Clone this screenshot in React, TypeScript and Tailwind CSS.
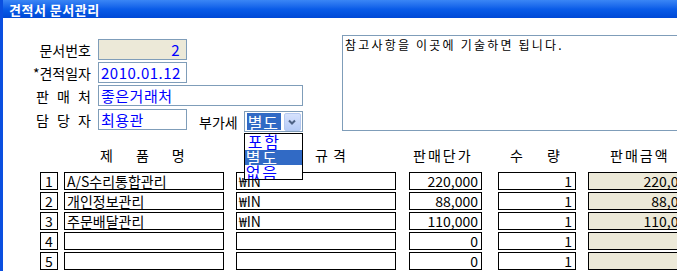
import React from "react";

const Cell = ({ w, children, bg = "bg-white", align = "justify-start", cls = "" }: { w: string; children?: React.ReactNode; bg?: string; align?: string; cls?: string }) => (
  <div className={`${w} h-[18px] shrink-0 border border-black ${bg} flex items-center ${align} px-[2px] overflow-hidden whitespace-nowrap text-[14px] leading-none text-black ${cls}`}>
    {children}
  </div>
);

const rows = [
  { n: "1", name: "A/S수리통합관리", spec: "₩IN", price: "220,000", qty: "1", amt: "220,000" },
  { n: "2", name: "개인정보관리", spec: "₩IN", price: "88,000", qty: "1", amt: "88,000" },
  { n: "3", name: "주문배달관리", spec: "₩IN", price: "110,000", qty: "1", amt: "110,000" },
  { n: "4", name: "", spec: "", price: "0", qty: "1", amt: "" },
  { n: "5", name: "", spec: "", price: "0", qty: "1", amt: "" },
];

const Field = ({ w, children, bg = "bg-white", right = false }: { w: string; children?: React.ReactNode; bg?: string; right?: boolean }) => (
  <div className={`${w} h-[21px] shrink-0 border border-[#7f9db9] ${bg} flex items-center ${right ? "justify-end pr-[6px]" : "pl-[2px]"} text-[15px] leading-none text-[#0000ff] tracking-[0.5px] whitespace-nowrap overflow-hidden`}>
    {children}
  </div>
);

export default function App() {
  return (
    <div className="w-[677px] h-[271px] overflow-hidden bg-white flex flex-col font-['Noto_Sans_CJK_KR',sans-serif] text-black">
      <div className="h-[18px] shrink-0 bg-gradient-to-b from-[#3a86f5] via-[#0a5ce8] to-[#0049d6] flex items-center pl-[6px] border-l-[3px] border-[#0a4fe0]">
        <span className="text-white text-[13px] font-bold leading-none tracking-[0.5px]">견적서 문서관리</span>
      </div>
      <div className="flex-1 border-l-[3px] border-[#0a4fe0] flex flex-col">
        <div className="flex pt-[17px]">
          <div className="w-[339px] shrink-0 pt-[4px] flex flex-col text-[14px] leading-none">
            <div className="flex items-center h-[21px] mb-[2px]">
              <div className="w-[88px] flex justify-end">문서번호</div>
              <div className="ml-[7px]">
                <Field w="w-[89px]" bg="bg-[#ece9d8]" right>2</Field>
              </div>
            </div>
            <div className="flex items-center h-[21px] mb-[2px]">
              <div className="w-[88px] flex justify-end">*견적일자</div>
              <div className="ml-[7px]">
                <Field w="w-[89px]">2010.01.12</Field>
              </div>
            </div>
            <div className="flex items-center h-[21px] mb-[3px]">
              <div className="w-[88px] flex justify-end">
                <div className="w-[55px] flex justify-between"><span>판</span><span>매</span><span>처</span></div>
              </div>
              <div className="ml-[7px]">
                <Field w="w-[205px]">좋은거래처</Field>
              </div>
            </div>
            <div className="flex items-center h-[21px]">
              <div className="w-[88px] flex justify-end">
                <div className="w-[55px] flex justify-between"><span>담</span><span>당</span><span>자</span></div>
              </div>
              <div className="ml-[7px]">
                <Field w="w-[89px]">최용관</Field>
              </div>
              <div className="ml-[12px] mt-[4px] text-[14px]">부가세</div>
              <div className="relative ml-[6px] mt-[4px]">
                <div className="w-[59px] h-[21px] border border-[#7f9db9] bg-white flex items-center pl-[2px] pr-[1px]">
                  <div className="h-[17px] w-[34px] bg-[#316ac5] text-white text-[16px] leading-none flex items-center pl-[1px] tracking-[1px]">별도</div>
                  <div className="ml-auto w-[17px] h-[18px] rounded-[2px] border border-[#b4c8f0] bg-gradient-to-b from-[#d6e2fd] to-[#b6cbf7] flex items-center justify-center">
                    <svg width="8" height="6" viewBox="0 0 8 6"><path d="M1 1.5 L4 4.5 L7 1.5" fill="none" stroke="#4d6185" strokeWidth="2" /></svg>
                  </div>
                </div>
                <div className="absolute left-0 top-[22px] w-[59px] h-[47px] border border-black bg-white overflow-hidden flex flex-col z-10">
                  <div className="h-[16px] shrink-0 text-[16px] leading-[15px] text-[#0000ff] pl-[3px] tracking-[2px]">포함</div>
                  <div className="h-[15px] shrink-0 bg-[#316ac5] text-[16px] leading-[15px] text-white pl-[1px] tracking-[2px]">별도</div>
                  <div className="h-[16px] shrink-0 text-[16px] leading-[15px] text-[#0000ff] pl-[1px] tracking-[2px]">없음</div>
                </div>
              </div>
            </div>
          </div>
          <div className="w-[360px] h-[96px] shrink-0 border border-[#7f9db9] bg-white pl-[2px] pt-[2px] text-[12px] leading-[14px] tracking-[2.2px] whitespace-nowrap">
            참고사항을 이곳에 기술하면 됩니다.
          </div>
        </div>

        <div className="flex items-center h-[18px] mt-[15px] pl-[37px] text-[14px] leading-none">
          <div className="w-[18px] shrink-0" />
          <div className="w-[160px] ml-[6px] shrink-0 flex pl-[36px] gap-[23px]"><span>제</span><span>품</span><span>명</span></div>
          <div className="w-[160px] ml-[12px] shrink-0 flex pl-[79px] gap-[5px]"><span>규</span><span>격</span></div>
          <div className="w-[73px] ml-[13px] shrink-0 flex pl-[4px] tracking-[2px]">판매단가</div>
          <div className="w-[78px] ml-[16px] shrink-0 flex pl-[12px] gap-[24px]"><span>수</span><span>량</span></div>
          <div className="w-[110px] ml-[12px] shrink-0 flex pl-[22px] tracking-[2px]">판매금액</div>
        </div>

        <div className="flex flex-col gap-[2px] mt-[8px] pl-[37px]">
          {rows.map((r) => (
            <div key={r.n} className="flex items-center">
              <Cell w="w-[18px]" align="justify-center">{r.n}</Cell>
              <div className="ml-[6px]"><Cell w="w-[160px]">{r.name}</Cell></div>
              <div className="ml-[12px]"><Cell w="w-[160px]">{r.spec}</Cell></div>
              <div className="ml-[13px]"><Cell w="w-[73px]" align="justify-end" cls="pr-[3px]">{r.price}</Cell></div>
              <div className="ml-[16px]"><Cell w="w-[78px]" align="justify-end" cls="pr-[3px]">{r.qty}</Cell></div>
              <div className="ml-[12px] shrink-0"><Cell w="w-[110px]" bg="bg-[#ece9d8]" align="justify-end" cls="pr-[3px]">{r.amt}</Cell></div>
            </div>
          ))}
        </div>
      </div>
    </div>
  );
}
